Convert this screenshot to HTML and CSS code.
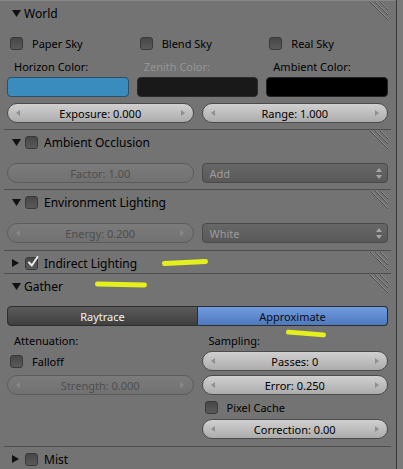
FILE: index.html
```html
<!DOCTYPE html>
<html>
<head>
<meta charset="utf-8">
<link rel="stylesheet" href="styles.css">
</head>
<body>
<div class="app">
  <div class="panels">
    <section class="panel">
      <div class="hdr">
        <svg class="tri" viewBox="0 0 9 7"><polygon points="0,0 9,0 4.5,7"/></svg>
        <span class="title">World</span>
        <svg class="grip" viewBox="0 0 18 18"><path class="gd" d="M0 0 L18 18 M5 0 L18 13 M10 0 L18 8"/><path class="gl" d="M1 0 L18 17 M6 0 L18 12 M11 0 L18 7"/></svg>
      </div>
      <div class="body world">
        <div class="row3">
          <div class="chk"><span class="box"></span>Paper Sky</div>
          <div class="chk"><span class="box"></span>Blend Sky</div>
          <div class="chk"><span class="box"></span>Real Sky</div>
        </div>
        <div class="row3 colors">
          <div class="colcol"><div class="lbl">Horizon Color:</div><div class="swatch horizon"></div></div>
          <div class="colcol"><div class="lbl dim">Zenith Color:</div><div class="swatch zenith"></div></div>
          <div class="colcol"><div class="lbl">Ambient Color:</div><div class="swatch ambient"></div></div>
        </div>
        <div class="row2 gap6">
          <div class="num"><svg class="arr" viewBox="0 0 4 6"><polygon points="4,0 0,3 4,6"/></svg><span>Exposure: 0.000</span><svg class="arr" viewBox="0 0 4 6"><polygon points="0,0 4,3 0,6"/></svg></div>
          <div class="num"><svg class="arr" viewBox="0 0 4 6"><polygon points="4,0 0,3 4,6"/></svg><span>Range: 1.000</span><svg class="arr" viewBox="0 0 4 6"><polygon points="0,0 4,3 0,6"/></svg></div>
        </div>
      </div>
    </section>
    <div class="sep"></div>
    <section class="panel">
      <div class="hdr">
        <svg class="tri" viewBox="0 0 9 7"><polygon points="0,0 9,0 4.5,7"/></svg>
        <span class="box hbox"></span>
        <span class="title">Ambient Occlusion</span>
        <svg class="grip" viewBox="0 0 18 18"><path class="gd" d="M0 0 L18 18 M5 0 L18 13 M10 0 L18 8"/><path class="gl" d="M1 0 L18 17 M6 0 L18 12 M11 0 L18 7"/></svg>
      </div>
      <div class="body single b6">
        <div class="row2">
          <div class="num dis center"><span>Factor: 1.00</span></div>
          <div class="menu"><span>Add</span><svg class="updown" viewBox="0 0 6 11"><polygon points="0,4 3,0 6,4"/><polygon points="0,7 6,7 3,11"/></svg></div>
        </div>
      </div>
    </section>
    <div class="sep"></div>
    <section class="panel">
      <div class="hdr">
        <svg class="tri" viewBox="0 0 9 7"><polygon points="0,0 9,0 4.5,7"/></svg>
        <span class="box hbox"></span>
        <span class="title">Environment Lighting</span>
        <svg class="grip" viewBox="0 0 18 18"><path class="gd" d="M0 0 L18 18 M5 0 L18 13 M10 0 L18 8"/><path class="gl" d="M1 0 L18 17 M6 0 L18 12 M11 0 L18 7"/></svg>
      </div>
      <div class="body single b7">
        <div class="row2">
          <div class="num dis"><svg class="arr" viewBox="0 0 4 6"><polygon points="4,0 0,3 4,6"/></svg><span>Energy: 0.200</span><svg class="arr" viewBox="0 0 4 6"><polygon points="0,0 4,3 0,6"/></svg></div>
          <div class="menu"><span>White</span><svg class="updown" viewBox="0 0 6 11"><polygon points="0,4 3,0 6,4"/><polygon points="0,7 6,7 3,11"/></svg></div>
        </div>
      </div>
    </section>
    <div class="sep"></div>
    <section class="panel">
      <div class="hdr">
        <svg class="tri right" viewBox="0 0 7 8"><polygon points="0,0 7,4 0,8"/></svg>
        <span class="box hbox checked"><svg class="tick" viewBox="0 0 13 13"><path d="M3 6.5 L5.8 9.5 L11.5 1"/></svg></span>
        <span class="title">Indirect Lighting</span>
        <svg class="grip" viewBox="0 0 18 18"><path class="gd" d="M0 0 L18 18 M5 0 L18 13 M10 0 L18 8"/><path class="gl" d="M1 0 L18 17 M6 0 L18 12 M11 0 L18 7"/></svg>
      </div>
    </section>
    <div class="sep"></div>
    <section class="panel">
      <div class="hdr">
        <svg class="tri" viewBox="0 0 9 7"><polygon points="0,0 9,0 4.5,7"/></svg>
        <span class="title">Gather</span>
        <svg class="grip" viewBox="0 0 18 18"><path class="gd" d="M0 0 L18 18 M5 0 L18 13 M10 0 L18 8"/><path class="gl" d="M1 0 L18 17 M6 0 L18 12 M11 0 L18 7"/></svg>
      </div>
      <div class="body gather">
        <div class="seg">
          <div class="segb raytrace">Raytrace</div>
          <div class="segb approx">Approximate</div>
        </div>
        <div class="row2 cols">
          <div class="col">
            <div class="lbl">Attenuation:</div>
            <div class="chk"><span class="box"></span>Falloff</div>
            <div class="num dis mt4"><svg class="arr" viewBox="0 0 4 6"><polygon points="4,0 0,3 4,6"/></svg><span>Strength: 0.000</span><svg class="arr" viewBox="0 0 4 6"><polygon points="0,0 4,3 0,6"/></svg></div>
          </div>
          <div class="col">
            <div class="lbl">Sampling:</div>
            <div class="num"><svg class="arr" viewBox="0 0 4 6"><polygon points="4,0 0,3 4,6"/></svg><span>Passes: 0</span><svg class="arr" viewBox="0 0 4 6"><polygon points="0,0 4,3 0,6"/></svg></div>
            <div class="num mt4"><svg class="arr" viewBox="0 0 4 6"><polygon points="4,0 0,3 4,6"/></svg><span>Error: 0.250</span><svg class="arr" viewBox="0 0 4 6"><polygon points="0,0 4,3 0,6"/></svg></div>
            <div class="chk mt2"><span class="box"></span>Pixel Cache</div>
            <div class="num mt2"><svg class="arr" viewBox="0 0 4 6"><polygon points="4,0 0,3 4,6"/></svg><span>Correction: 0.00</span><svg class="arr" viewBox="0 0 4 6"><polygon points="0,0 4,3 0,6"/></svg></div>
          </div>
        </div>
      </div>
    </section>
    <div class="sep"></div>
    <section class="panel">
      <div class="hdr">
        <svg class="tri right" viewBox="0 0 7 8"><polygon points="0,0 7,4 0,8"/></svg>
        <span class="box hbox"></span>
        <span class="title">Mist</span>
      </div>
    </section>
  </div>
  <div class="vline"></div>
  <div class="strip"></div>
  <div class="mark mark1"></div>
  <div class="mark mark2"></div>
  <div class="mark mark3"></div>
</div>
</body>
</html>
```

FILE: styles.css
```css
* { box-sizing: border-box; }
html, body { margin: 0; padding: 0; }
body {
  width: 403px;
  height: 469px;
  overflow: hidden;
  background: #737373;
  font-family: "Noto Sans", "DejaVu Sans", sans-serif;
  font-size: 11px;
  color: #000;
}
.app {
  position: relative;
  display: flex;
  width: 403px;
  height: 469px;
}
.panels {
  width: 396px;
  border-top: 1px solid #878787;
  display: flex;
  flex-direction: column;
  flex: none;
}
.vline { width: 1px; background: #3a3a3a; flex: none; }
.strip { flex: 1; background: #7a7a7a; }
.sep { height: 1px; margin: 0 5px 0 4px; background: #4e4e4e; flex: none; }

.hdr {
  height: 22px;
  display: flex;
  align-items: center;
  padding: 2px 8px 0 12px;
  font-size: 12px;
}
.tri { width: 9px; height: 7px; flex: none; margin-right: 3px; fill: #111; }
.tri.right { width: 7px; height: 8px; margin-right: 5px; }
.title { white-space: nowrap; }
.grip {
  width: 18px;
  height: 18px;
  margin-left: auto;
  align-self: flex-start;
  margin-top: -1px;
  shape-rendering: crispEdges;
}
.grip .gd { stroke: #505050; stroke-width: 1; fill: none; }
.grip .gl { stroke: #8d8d8d; stroke-width: 1; fill: none; }

.box {
  width: 13px;
  height: 13px;
  border-radius: 3px;
  border: 1px solid #393939;
  background: linear-gradient(#474747, #5a5a5a);
  flex: none;
  position: relative;
}
.hbox { margin-left: 1px; margin-right: 6px; }
.tick {
  position: absolute;
  left: 0;
  top: -2px;
  width: 13px;
  height: 13px;
  fill: none;
  stroke: #ececec;
  stroke-width: 2;
  stroke-linecap: round;
  stroke-linejoin: round;
}

.body { padding: 0 8px 0 7px; display: flex; flex-direction: column; }
.world { padding-top: 10px; padding-bottom: 6px; }
.single { padding-top: 11px; }
.b6 { padding-bottom: 6px; }
.b7 { padding-bottom: 7px; }
.gather { padding-top: 10px; padding-bottom: 7px; }

.row3 { display: grid; grid-template-columns: repeat(3, 1fr); column-gap: 8px; }
.row2 { display: grid; grid-template-columns: 1fr 1fr; column-gap: 8px; }
.colors { margin-top: 4px; }
.gap6 { margin-top: 6px; }
.mt4 { margin-top: 4px; }
.mt2 { margin-top: 2px; }

.chk {
  display: flex;
  align-items: center;
  height: 20px;
  padding-left: 3px;
  gap: 9px;
  white-space: nowrap;
}
.lbl { height: 20px; line-height: 20px; padding-left: 7px; white-space: nowrap; }
.lbl.dim { color: #959595; }

.swatch { height: 20px; border-radius: 4px; border: 1px solid #333; }
.horizon { background: #3a8cbe; border-color: #2c4f66; }
.zenith { background: #191919; border-color: #2a2a2a; }
.ambient { background: #000; border-color: #222; }

.num {
  height: 20px;
  border-radius: 10px;
  border: 1px solid #4b4b4b;
  background: linear-gradient(#d0d0d0, #acacac);
  display: flex;
  align-items: center;
  justify-content: space-between;
  padding: 0 8px;
  white-space: nowrap;
}
.arr { width: 4px; height: 6px; fill: #8f8f8f; flex: none; }
.num.dis {
  background: linear-gradient(#7b7b7b, #717171);
  border-color: #5c5c5c;
  color: #4e4e4e;
}
.num.dis .arr { fill: #888; }
.num.center { justify-content: center; }

.menu {
  height: 20px;
  border-radius: 4px;
  border: 1px solid #4a4a4a;
  background: linear-gradient(#676767, #595959);
  color: #9c9c9c;
  display: flex;
  align-items: center;
  justify-content: space-between;
  padding: 0 5px 0 7px;
}
.updown { width: 6px; height: 11px; fill: #a6a6a6; }

.seg { display: flex; height: 20px; }
.segb {
  flex: 1;
  display: flex;
  align-items: center;
  justify-content: center;
  border: 1px solid #2d2d2d;
}
.raytrace {
  border-radius: 4px 0 0 4px;
  background: linear-gradient(#5b5b5b, #3f3f3f);
  color: #f2f2f2;
}
.approx {
  border-radius: 0 4px 4px 0;
  border-left: none;
  background: linear-gradient(#729ce0, #4f79bf);
  color: #0c0c0c;
}
.cols { margin-top: 5px; }
.col { display: flex; flex-direction: column; }

.mark {
  position: absolute;
  height: 5px;
  border-radius: 3px;
  background: #e4f01d;
}
.mark1 { left: 162px; top: 260px; width: 46px; transform: rotate(-3deg); }
.mark2 { left: 95px; top: 282px; width: 52px; transform: rotate(1deg); }
.mark3 { left: 286px; top: 331px; width: 40px; transform: rotate(4.5deg); }
```
